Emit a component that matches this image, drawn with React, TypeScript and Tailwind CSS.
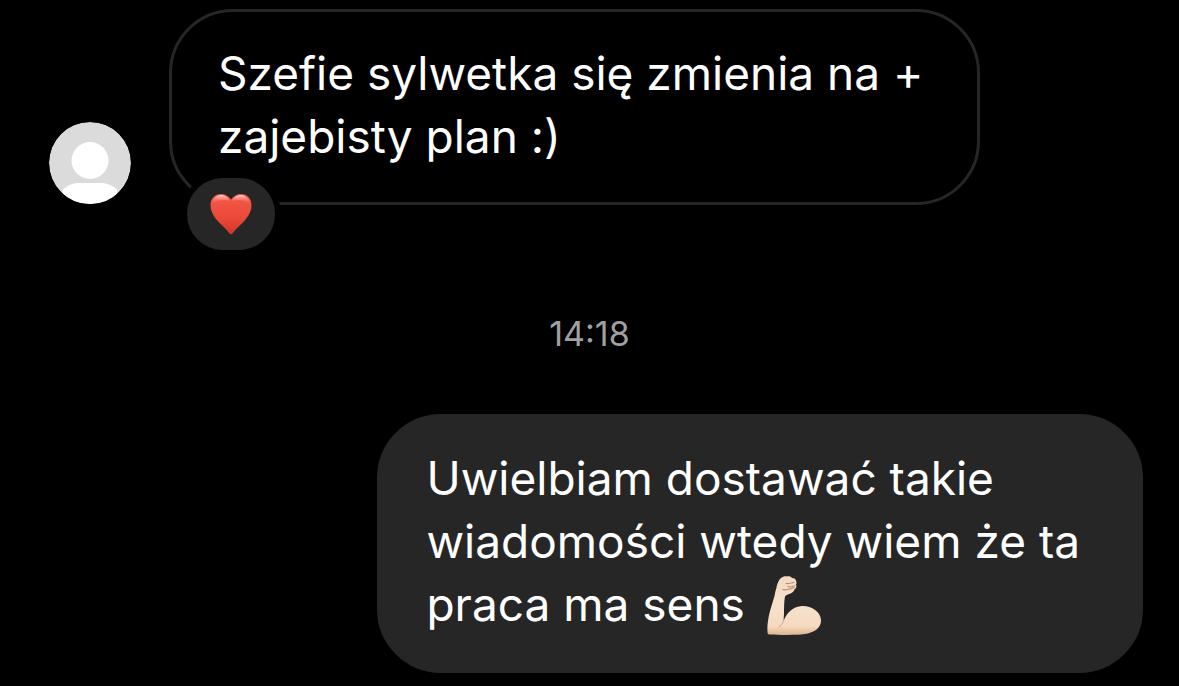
import type { ReactNode } from "react";

function Avatar() {
  return (
    <svg className="mb-px w-[82px] h-[82px] shrink-0 rounded-full" viewBox="0 0 82 82" role="img" aria-label="Avatar">
      <circle cx="41" cy="41" r="41" fill="#dbdbdb" />
      <circle cx="41" cy="38.5" r="18.5" fill="#fff" />
      <path d="M14 67.500C19 62.500 25 61 31 61h20c6 0 12 1.500 17 6.500L70 82H12z" fill="#fff" />
    </svg>
  );
}

function Heart() {
  return (
    <svg className="w-[42px] h-[42px]" viewBox="0 0 42 42" role="img" aria-label="Serce">
      <defs>
        <linearGradient id="heart-fill" x1="0" y1="0" x2="0" y2="1">
          <stop offset="0" stopColor="#f4594b" />
          <stop offset="0.6" stopColor="#ec4a39" />
          <stop offset="1" stopColor="#cf3527" />
        </linearGradient>
        <linearGradient id="heart-shine" x1="0" y1="0" x2="0" y2="1">
          <stop offset="0" stopColor="#ffd8d0" stopOpacity="0.95" />
          <stop offset="1" stopColor="#f4705f" stopOpacity="0.1" />
        </linearGradient>
      </defs>
      <path
        d="M21 6.500C18.500 3 15 1 11 1 5 1 .5 5.500.5 12c0 5 2 9.500 5.500 14C10 31 16 35.500 19.500 40.500c.7 1 2.300 1 3 0C26 35.500 32 31 36 26c3.500-4.500 5.500-9 5.500-14C41.500 5.500 37 1 31 1c-4 0-7.500 2-10 5.500z"
        fill="url(#heart-fill)"
      />
      <path d="M2 10.500C3 5 7 2 11 2c4.500 0 7.500 2.500 9 6-4-1-13-1.500-18 2.500z" fill="url(#heart-shine)" />
      <path d="M40 10.500C39 5 35 2 31 2c-4.500 0-7.500 2.500-9 6 4-1 13-1.500 18 2.500z" fill="url(#heart-shine)" />
    </svg>
  );
}

function Biceps() {
  return (
    <svg className="ml-2 -mt-3 -mb-1.5 inline-block w-14 h-[60px] align-middle" viewBox="0 0 56 60" role="img" aria-label="Biceps">
      <defs>
        <linearGradient id="arm-fill" x1="0" y1="0" x2="0" y2="1">
          <stop offset="0" stopColor="#f3d9c0" />
          <stop offset="0.5" stopColor="#f8e1cc" />
          <stop offset="0.85" stopColor="#f5dac1" />
          <stop offset="1" stopColor="#dcb48e" />
        </linearGradient>
      </defs>
      <path
        d="M1.500 56.500C1 51 2 44 4 36l4.500-15c.5-2 .5-4 1.500-6.500C11 9 12.500 5 15 3c2-1.500 4-2 6-1.500 2-.5 4 0 5 1.500 2.500 0 4 1 4 3 .8 1.200.8 2.500 0 3.500.8 2 .3 4-1.500 5-1 2.500-3 4-5.500 4.500-1.500 1-3 1-4 2.500-1 5-1 12-1 17.500l-.5 7c3-8 9-14 17-14.800 10-1 20 5 20.500 13.800.3 7-5 11.500-13 13.500-10 2-28 1.500-38.500 1-1.200 0-2-.8-2-2z"
        fill="url(#arm-fill)"
      />
      <path d="M17.500 46c-1 2.500-2.500 4.500-4.500 6" fill="none" stroke="#d3a680" strokeWidth="1" strokeLinecap="round" />
      <path
        d="M20 8.500c2 .5 5-.5 8-1M17 14.500c2.500 1.500 5-1 8-.5l3-1.500M22 11.500c2 1 4 0 6.500-.7"
        fill="none"
        stroke="#b98f68"
        strokeWidth="1.200"
        strokeLinecap="round"
      />
    </svg>
  );
}

function Bubble({ className, children }: { className: string; children: ReactNode }) {
  return (
    <div className={`relative rounded-[64px] border-[3px] border-[#262626] pt-[30px] pb-[34px] pl-[46px] text-[46px] leading-[63px] whitespace-nowrap text-white ${className}`}>
      {children}
    </div>
  );
}

export default function App() {
  return (
    <main className="min-h-screen bg-black pt-[9px] font-[Inter,sans-serif]">
      <div className="flex items-end gap-[38px] pl-[49px]">
        <Avatar />
        <Bubble className="bg-black pr-[54px]">
          <p>
            Szefie sylwetka się zmienia na +<br />
            zajebisty plan :)
          </p>
          {/* reaction overlaps the bottom edge of the bubble */}
          <button
            type="button"
            aria-label="Reakcja: serce"
            className="absolute left-[9px] -bottom-[54px] flex items-center justify-center rounded-full border-6 border-black bg-[#262626] w-25 h-[84px]"
          >
            <Heart />
          </button>
        </Bubble>
      </div>

      <time className="mt-[109px] block text-center text-[34px] leading-10 text-[#a0a0a0]">14:18</time>

      <div className="mt-[60px] flex justify-end pr-9">
        <Bubble className="bg-[#262626] pr-[60px]">
          <p>
            Uwielbiam dostawać takie
            <br />
            wiadomości wtedy wiem że ta
            <br />
            praca ma sens <Biceps />
          </p>
        </Bubble>
      </div>
    </main>
  );
}
